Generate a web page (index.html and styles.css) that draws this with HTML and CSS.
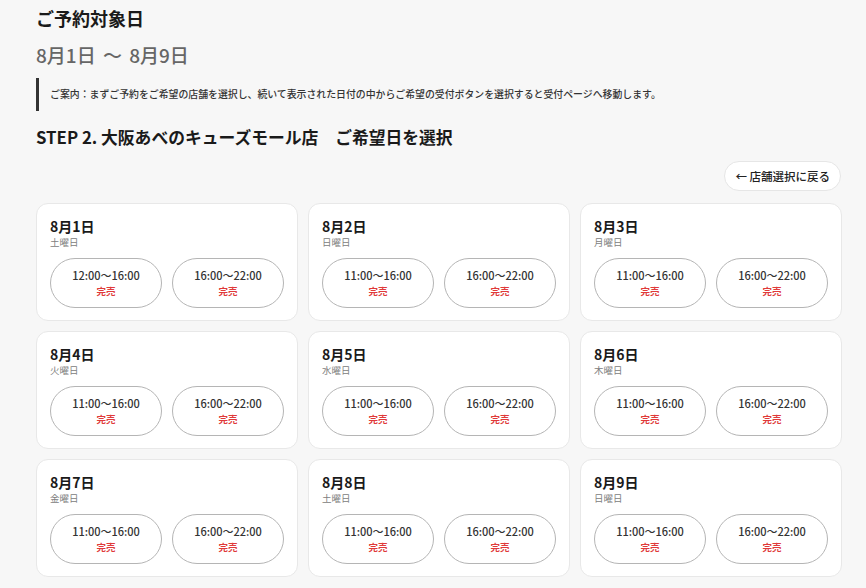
FILE: index.html
```html
<!DOCTYPE html>
<html lang="ja">
<head>
<meta charset="utf-8">
<title>ご予約対象日</title>
<link rel="stylesheet" href="styles.css">
</head>
<body>
<main class="page">
  <h1 class="title">ご予約対象日</h1>
  <p class="range">8月1日 〜 8月9日</p>
  <p class="notice">ご案内：まずご予約をご希望の店舗を選択し、続いて表示された日付の中からご希望の受付ボタンを選択すると受付ページへ移動します。</p>
  <h2 class="step">STEP 2. 大阪あべのキューズモール店　ご希望日を選択</h2>
  <div class="toolbar">
    <button class="back">← 店舗選択に戻る</button>
  </div>
  <section class="days">
    <div class="day">
      <div class="day-date">8月1日</div>
      <div class="day-week">土曜日</div>
      <div class="slots">
        <button class="slot"><span class="slot-time">12:00〜16:00</span><span class="slot-state">完売</span></button>
        <button class="slot"><span class="slot-time">16:00〜22:00</span><span class="slot-state">完売</span></button>
      </div>
    </div>
    <div class="day">
      <div class="day-date">8月2日</div>
      <div class="day-week">日曜日</div>
      <div class="slots">
        <button class="slot"><span class="slot-time">11:00〜16:00</span><span class="slot-state">完売</span></button>
        <button class="slot"><span class="slot-time">16:00〜22:00</span><span class="slot-state">完売</span></button>
      </div>
    </div>
    <div class="day">
      <div class="day-date">8月3日</div>
      <div class="day-week">月曜日</div>
      <div class="slots">
        <button class="slot"><span class="slot-time">11:00〜16:00</span><span class="slot-state">完売</span></button>
        <button class="slot"><span class="slot-time">16:00〜22:00</span><span class="slot-state">完売</span></button>
      </div>
    </div>
    <div class="day">
      <div class="day-date">8月4日</div>
      <div class="day-week">火曜日</div>
      <div class="slots">
        <button class="slot"><span class="slot-time">11:00〜16:00</span><span class="slot-state">完売</span></button>
        <button class="slot"><span class="slot-time">16:00〜22:00</span><span class="slot-state">完売</span></button>
      </div>
    </div>
    <div class="day">
      <div class="day-date">8月5日</div>
      <div class="day-week">水曜日</div>
      <div class="slots">
        <button class="slot"><span class="slot-time">11:00〜16:00</span><span class="slot-state">完売</span></button>
        <button class="slot"><span class="slot-time">16:00〜22:00</span><span class="slot-state">完売</span></button>
      </div>
    </div>
    <div class="day">
      <div class="day-date">8月6日</div>
      <div class="day-week">木曜日</div>
      <div class="slots">
        <button class="slot"><span class="slot-time">11:00〜16:00</span><span class="slot-state">完売</span></button>
        <button class="slot"><span class="slot-time">16:00〜22:00</span><span class="slot-state">完売</span></button>
      </div>
    </div>
    <div class="day">
      <div class="day-date">8月7日</div>
      <div class="day-week">金曜日</div>
      <div class="slots">
        <button class="slot"><span class="slot-time">11:00〜16:00</span><span class="slot-state">完売</span></button>
        <button class="slot"><span class="slot-time">16:00〜22:00</span><span class="slot-state">完売</span></button>
      </div>
    </div>
    <div class="day">
      <div class="day-date">8月8日</div>
      <div class="day-week">土曜日</div>
      <div class="slots">
        <button class="slot"><span class="slot-time">11:00〜16:00</span><span class="slot-state">完売</span></button>
        <button class="slot"><span class="slot-time">16:00〜22:00</span><span class="slot-state">完売</span></button>
      </div>
    </div>
    <div class="day">
      <div class="day-date">8月9日</div>
      <div class="day-week">日曜日</div>
      <div class="slots">
        <button class="slot"><span class="slot-time">11:00〜16:00</span><span class="slot-state">完売</span></button>
        <button class="slot"><span class="slot-time">16:00〜22:00</span><span class="slot-state">完売</span></button>
      </div>
    </div>
  </section>
</main>
</body>
</html>
```

FILE: styles.css
```css
* { box-sizing: border-box; }

html, body {
  margin: 0;
  background: #f7f7f7;
  color: #1a1a1a;
  font-family: "Noto Sans CJK JP", "Noto Sans", sans-serif;
}

.page {
  padding: 5px 24px 0 36px;
}

.title {
  margin: 0;
  font-size: 18px;
  line-height: 26px;
  font-weight: 700;
}

.range {
  margin: 10px 0 0;
  font-size: 19px;
  line-height: 28px;
  font-weight: 500;
  color: #666;
  word-spacing: 3px;
}

.notice {
  margin: 9px 0 0;
  border-left: 3px solid #333;
  padding: 9px 0 9px 11px;
  font-size: 9.9px;
  line-height: 15px;
  color: #333;
  font-weight: 500;
}

.step {
  margin: 14px 0 0;
  font-size: 16.8px;
  line-height: 24px;
  font-weight: 700;
}

.toolbar {
  display: flex;
  justify-content: flex-end;
  margin-top: 12px;
}

.back {
  font: inherit;
  font-size: 11.5px;
  font-weight: 500;
  color: #222;
  background: #fff;
  border: 1px solid #e6e6e6;
  border-radius: 999px;
  height: 30px;
  padding: 0 10px;
  margin-right: 1px;
}

.days {
  display: grid;
  grid-template-columns: repeat(3, 1fr);
  gap: 10px;
  margin-top: 12px;
}

.day {
  background: #fff;
  border: 1px solid #e8e8e8;
  border-radius: 12px;
  padding: 12px 13px 13px;
  height: 118px;
}

.day-date {
  font-size: 14px;
  line-height: 20px;
  font-weight: 700;
}

.day-week {
  font-size: 9.5px;
  line-height: 13px;
  color: #808080;
}

.slots {
  display: grid;
  grid-template-columns: 1fr 1fr;
  gap: 10px;
  margin-top: 9px;
}

.slot {
  font: inherit;
  background: #fff;
  border: 1px solid #b5b5b5;
  border-radius: 999px;
  height: 50px;
  display: flex;
  flex-direction: column;
  align-items: center;
  justify-content: center;
  padding: 0 0 1px;
}

.slot-time {
  font-size: 11px;
  line-height: 16px;
  font-weight: 500;
  color: #333;
}

.slot-state {
  margin-top: 1px;
  font-size: 9.5px;
  line-height: 14px;
  font-weight: 700;
  color: #e03a3a;
}
```
